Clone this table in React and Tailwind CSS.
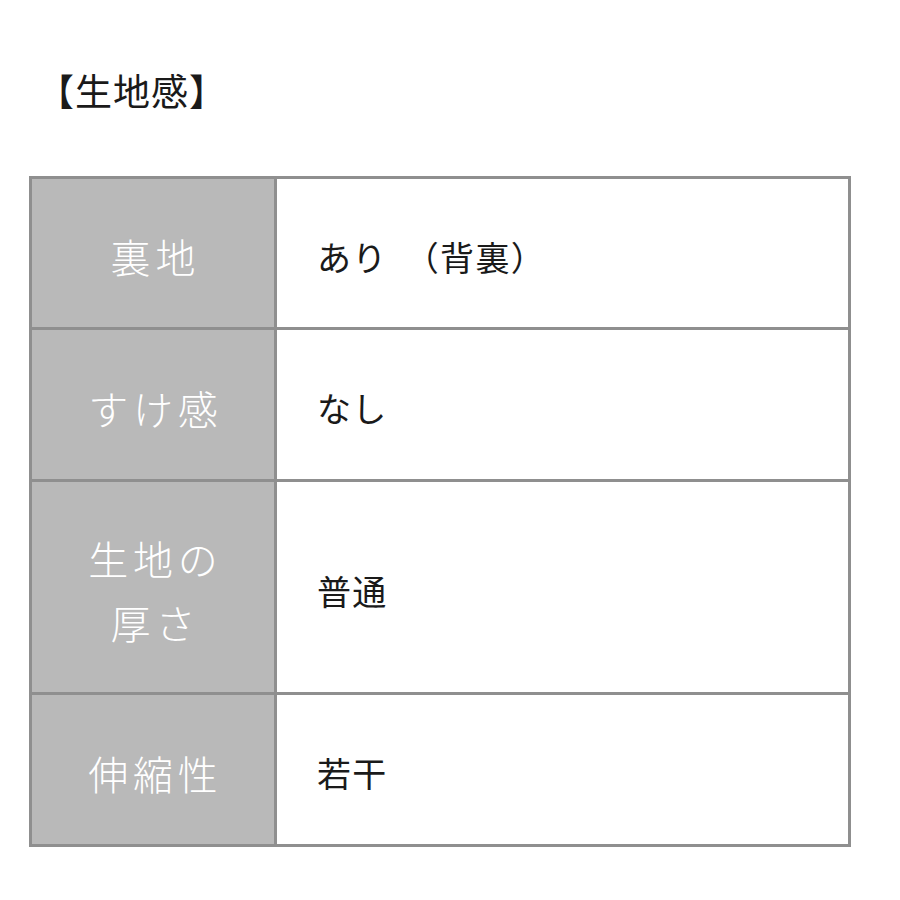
const rows = [
  { label: ["裏地"], value: <>あり<span className="ml-[17px]">（背裏）</span></>, h: "h-[148px]" },
  { label: ["すけ感"], value: "なし", h: "h-[152px]" },
  { label: ["生地の", "厚さ"], value: "普通", h: "h-[213px]" },
  { label: ["伸縮性"], value: "若干", h: "h-[152px]" },
];

export default function App() {
  return (
    <div
      className="w-[900px] h-[900px] bg-white text-[#1a1a1a]"
      style={{ fontFamily: '"Noto Sans CJK JP", "Noto Sans", sans-serif' }}
    >
      <div className="pt-[66px] pl-[37px]">
        <h1 className="text-[37px] leading-[48px] font-normal tracking-[1px]">【生地感】</h1>
      </div>
      <div className="mt-[62px] ml-[29px] w-[822px] border-[3px] border-[#8f8f8f]">
        {rows.map((r, i) => (
          <div
            key={i}
            className={`flex ${r.h} ${i > 0 ? "border-t-[3px] border-[#8f8f8f]" : ""}`}
          >
            <div className="w-[245px] shrink-0 bg-[#b9b9b9] border-r-[3px] border-[#8f8f8f] flex flex-col items-center justify-center pt-[6px] text-white font-light">
              {r.label.map((t) => (
                <div key={t} className="text-[40px] leading-[64px] tracking-[0.12em] pl-[0.12em]">
                  {t}
                </div>
              ))}
            </div>
            <div className="flex-1 flex items-center pl-[40px] pt-[6px] text-[34px] tracking-[0.04em] text-[#1a1a1a]">
              {r.value}
            </div>
          </div>
        ))}
      </div>
    </div>
  );
}
